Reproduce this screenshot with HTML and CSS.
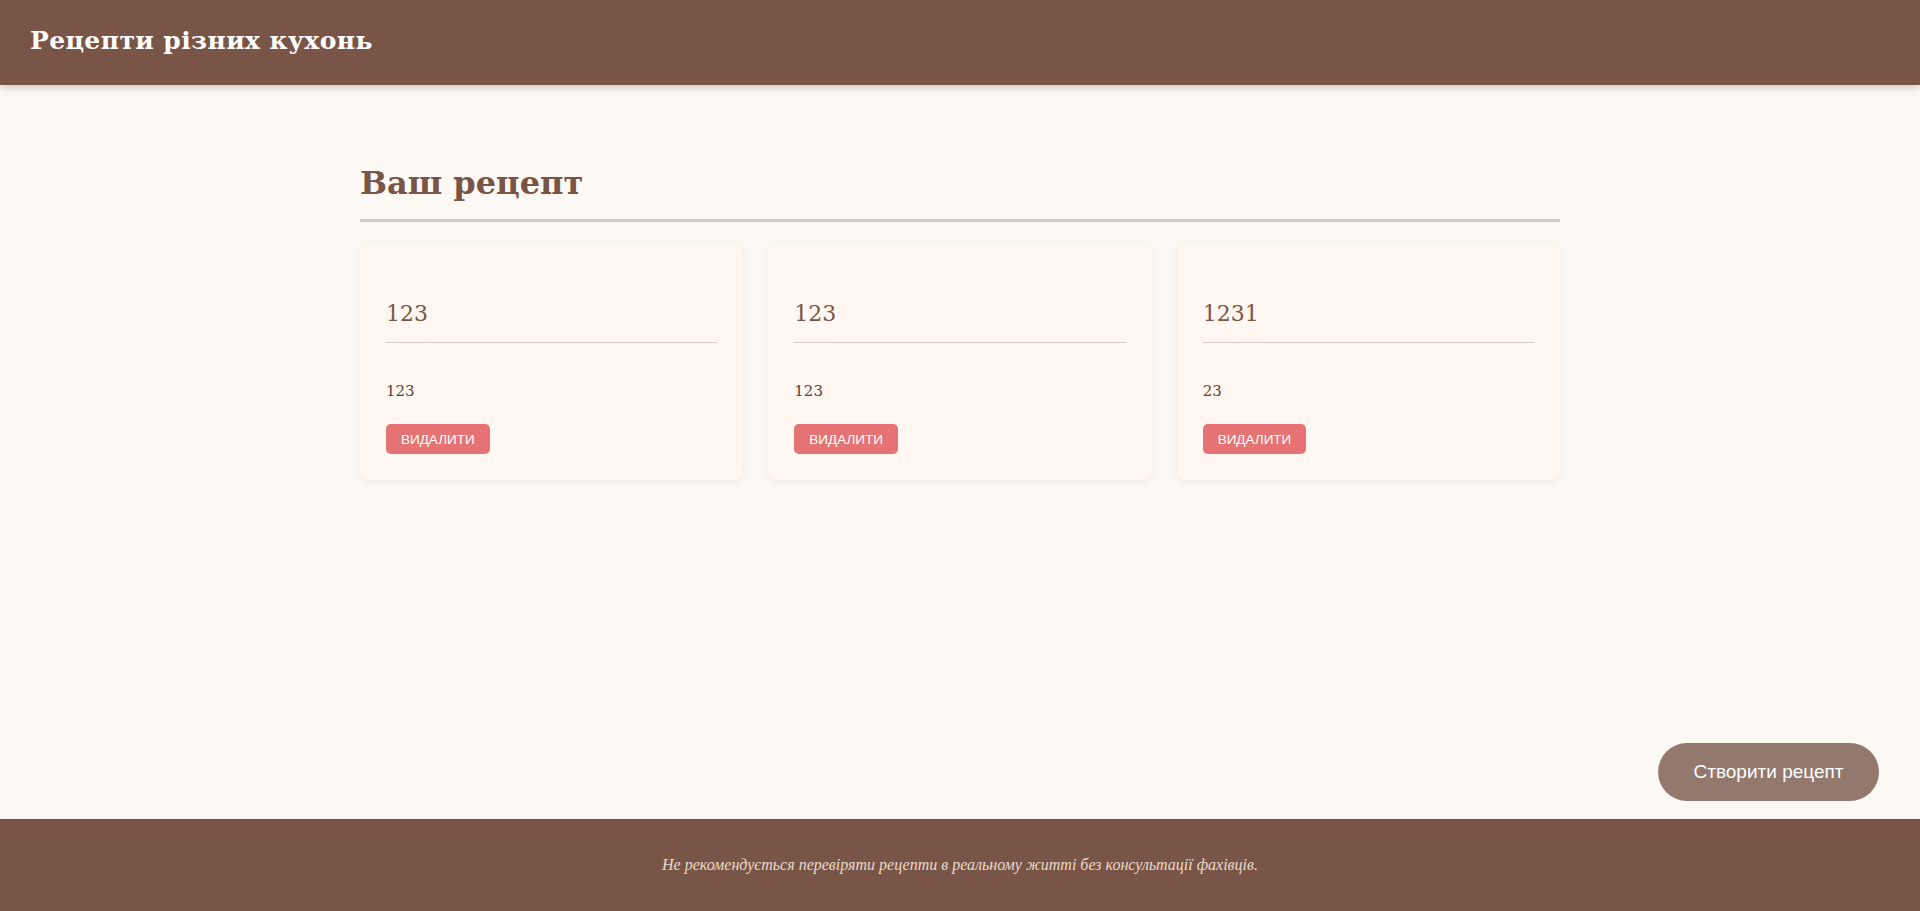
FILE: index.html
```html
<!DOCTYPE html>
<html lang="uk">
<head>
<meta charset="utf-8">
<title>Рецепти різних кухонь</title>
<link rel="stylesheet" href="styles.css">
</head>
<body>
<header class="site-header">
  <h1 class="site-title">Рецепти різних кухонь</h1>
</header>
<main class="main">
  <section class="container">
    <h2 class="section-title">Ваш рецепт</h2>
    <div class="cards">
      <article class="card">
        <h3 class="card-title">123</h3>
        <p class="card-text">123</p>
        <button class="btn-delete">Видалити</button>
      </article>
      <article class="card">
        <h3 class="card-title">123</h3>
        <p class="card-text">123</p>
        <button class="btn-delete">Видалити</button>
      </article>
      <article class="card">
        <h3 class="card-title">1231</h3>
        <p class="card-text">23</p>
        <button class="btn-delete">Видалити</button>
      </article>
    </div>
  </section>
</main>
<button class="btn-create">Створити рецепт</button>
<footer class="site-footer">
  <p class="footer-text">Не рекомендується перевіряти рецепти в реальному житті без консультації фахівців.</p>
</footer>
</body>
</html>
```

FILE: styles.css
```css
* { box-sizing: border-box; }

html, body { height: 100%; }

body {
  margin: 0;
  min-height: 100vh;
  display: flex;
  flex-direction: column;
  background: #fcf8f3;
  font-family: "DejaVu Serif", "Liberation Serif", serif;
  color: #5d4037;
}

.site-header {
  height: 85px;
  background: #795548;
  display: flex;
  align-items: center;
  padding: 0 30px 4px;
  box-shadow: 0 2px 8px rgba(0, 0, 0, 0.22);
  position: relative;
  z-index: 1;
}

.site-title {
  margin: 0;
  font-size: 25px;
  font-weight: bold;
  color: #ffffff;
  letter-spacing: 0.4px;
}

.main {
  flex: 1;
}

.container {
  width: 1200px;
  margin: 76px auto 0;
}

.section-title {
  margin: 0;
  font-size: 32px;
  line-height: 44px;
  font-weight: bold;
  color: #795548;
  padding-bottom: 14px;
  border-bottom: 3px solid #d7ccc8;
}

.cards {
  display: grid;
  grid-template-columns: repeat(3, 1fr);
  gap: 25px;
  margin-top: 21px;
}

.card {
  background: #fff7f0;
  border-radius: 10px;
  padding: 26px 26px 26px;
  box-shadow: 0 2px 8px rgba(0, 0, 0, 0.06);
}

.card-title {
  margin: 31px 0 0;
  padding-bottom: 14px;
  border-bottom: 1px solid #d7ccc8;
  font-size: 22px;
  line-height: 28px;
  font-weight: normal;
  color: #795548;
}

.card-text {
  margin: 39px 0 24px;
  font-size: 15px;
  line-height: 18px;
  color: #5d4037;
}

.btn-delete {
  display: block;
  height: 30px;
  padding: 0 15px;
  border: none;
  border-radius: 5px;
  background: #e57373;
  color: #ffffff;
  font-family: "Liberation Sans", Arial, sans-serif;
  font-size: 13.5px;
  text-transform: uppercase;
  cursor: pointer;
}

.btn-create {
  position: fixed;
  right: 41px;
  bottom: 110px;
  width: 221px;
  height: 58px;
  border: none;
  border-radius: 29px;
  background: #93786e;
  color: #ffffff;
  font-family: "Liberation Sans", Arial, sans-serif;
  font-size: 19px;
  cursor: pointer;
}

.site-footer {
  height: 92px;
  background: #795548;
  display: flex;
  align-items: center;
  justify-content: center;
}

.footer-text {
  margin: 0;
  font-family: "Liberation Serif", "DejaVu Serif", serif;
  font-size: 16px;
  font-style: italic;
  color: #ead9c8;
}
```
